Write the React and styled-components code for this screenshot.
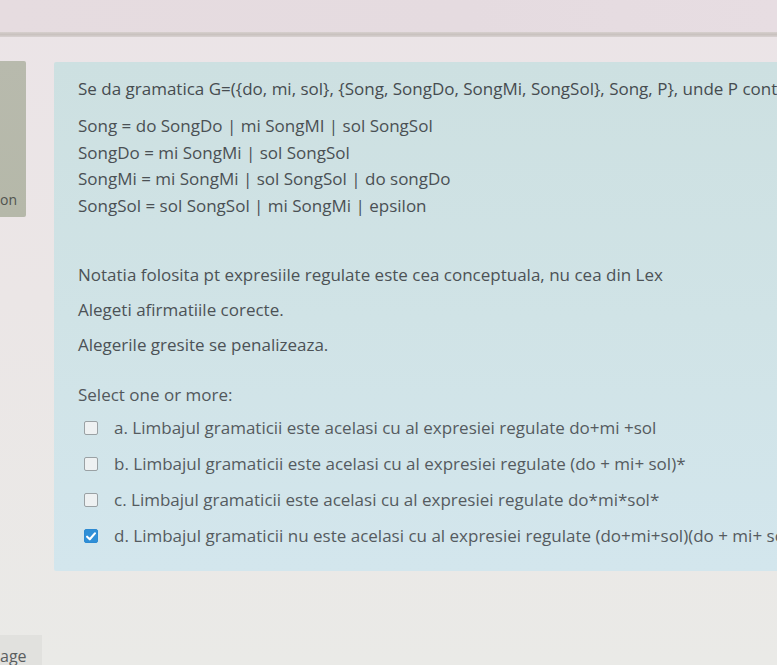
import React from "react";
import styled, { createGlobalStyle } from "styled-components";

const GlobalStyle = createGlobalStyle`
  html, body {
    margin: 0;
    padding: 0;
    background: #eae7e6;
  }
  body {
    font-family: "Open Sans", "Noto Sans", sans-serif;
    color: #4c5256;
  }
`;

const productions = [
  "Song = do SongDo | mi SongMI | sol SongSol",
  "SongDo = mi SongMi | sol SongSol",
  "SongMi = mi SongMi | sol SongSol | do songDo",
  "SongSol = sol SongSol | mi SongMi | epsilon",
];

const options = [
  { key: "a", text: "Limbajul gramaticii este acelasi cu al expresiei regulate do+mi +sol" },
  { key: "b", text: "Limbajul gramaticii este acelasi cu al expresiei regulate (do + mi+ sol)*" },
  { key: "c", text: "Limbajul gramaticii este acelasi cu al expresiei regulate do*mi*sol*" },
  {
    key: "d",
    text: "Limbajul gramaticii nu este acelasi cu al expresiei regulate (do+mi+sol)(do + mi+ sol)*",
    checked: true,
  },
];

export default function App() {
  return (
    <>
      <GlobalStyle />
      <Screen>
        <TopBar />
        <Divider />
        <Body>
          <Side>
            <NavBlock>
              <NavLabel>on</NavLabel>
            </NavBlock>
            <PageTab>age</PageTab>
          </Side>
          <Main>
            <Question>
              <Para>
                Se da gramatica G=({"{"}do, mi, sol{"}"}, {"{"}Song, SongDo, SongMi, SongSol{"}"}, Song, P{"}"}, unde P contine:
              </Para>
              <Grammar>
                {productions.map((p) => (
                  <Rule key={p}>{p}</Rule>
                ))}
              </Grammar>
              <Notes>
                <Note>Notatia folosita pt expresiile regulate este cea conceptuala, nu cea din Lex</Note>
                <Note>Alegeti afirmatiile corecte.</Note>
                <Note>Alegerile gresite se penalizeaza.</Note>
              </Notes>
              <Prompt>Select one or more:</Prompt>
              <Answers>
                {options.map((o) => (
                  <Answer key={o.key}>
                    <Box $checked={o.checked}>
                      {o.checked && (
                        <svg width="10" height="9" viewBox="0 0 9 8">
                          <path
                            d="M1 4.2 L3.4 6.5 L8 1.2"
                            fill="none"
                            stroke="#fff"
                            strokeWidth="1.9"
                            strokeLinecap="round"
                            strokeLinejoin="round"
                          />
                        </svg>
                      )}
                    </Box>
                    <AnswerText>
                      {o.key}. {o.text}
                    </AnswerText>
                  </Answer>
                ))}
              </Answers>
            </Question>
          </Main>
        </Body>
      </Screen>
    </>
  );
}

const Screen = styled.div`
  width: 777px;
  height: 665px;
  overflow: hidden;
  display: flex;
  flex-direction: column;
  background: linear-gradient(180deg, #ebe4e7 0%, #ebe6e6 45%, #eaeae7 100%);
`;

const TopBar = styled.div`
  height: 32px;
  flex-shrink: 0;
  background: linear-gradient(90deg, #e6dce0 0%, #e5dbe0 60%, #e7dde2 100%);
`;

const Divider = styled.div`
  height: 5px;
  flex-shrink: 0;
  background: linear-gradient(180deg, #d6cfcd 0%, #c9c2bf 50%, #d8d1d1 100%);
`;

const Body = styled.div`
  flex: 1;
  display: flex;
  min-height: 0;
`;

const Side = styled.div`
  width: 54px;
  flex-shrink: 0;
  display: flex;
  flex-direction: column;
  justify-content: space-between;
  padding-top: 24px;
`;

const NavBlock = styled.div`
  width: 26px;
  height: 156px;
  background: linear-gradient(180deg, #b8baad 0%, #b5b8a9 100%);
  border-radius: 0 2px 2px 0;
  display: flex;
  align-items: flex-end;
  padding-bottom: 9px;
  box-sizing: border-box;
`;

const NavLabel = styled.span`
  font-size: 14px;
  line-height: 16px;
  color: #50544f;
`;

const PageTab = styled.div`
  width: 42px;
  height: 30px;
  background: #e1e1de;
  font-size: 16px;
  line-height: 16px;
  padding-top: 13px;
  box-sizing: border-box;
  color: #5a5e60;
`;

const Main = styled.div`
  flex: 1;
  padding-top: 25px;
  min-width: 0;
`;

const Question = styled.div`
  width: 960px;
  box-sizing: border-box;
  padding: 14px 24px 22px;
  background: linear-gradient(180deg, #cde0e1 0%, #d0e3e6 50%, #d3e6ed 100%);
  border-radius: 2px 0 0 2px;
`;

const Para = styled.p`
  margin: 0;
  font-size: 17px;
  line-height: 26px;
  white-space: nowrap;
  color: #464c50;
`;

const Grammar = styled.div`
  margin-top: 11px;
  display: flex;
  flex-direction: column;
`;

const Rule = styled.div`
  font-size: 17px;
  line-height: 26.5px;
  color: #4a5054;
`;

const Notes = styled.div`
  margin-top: 43px;
  display: flex;
  flex-direction: column;
  gap: 9px;
`;

const Note = styled.p`
  margin: 0;
  font-size: 17px;
  line-height: 26px;
  color: #4c5256;
`;

const Prompt = styled.div`
  margin-top: 24px;
  font-size: 17px;
  line-height: 26px;
  color: #52585c;
`;

const Answers = styled.div`
  margin-top: 7px;
  display: flex;
  flex-direction: column;
  gap: 10px;
  padding-left: 6px;
`;

const Answer = styled.label`
  display: flex;
  align-items: center;
  gap: 16px;
  height: 26px;
`;

const Box = styled.span`
  width: 14px;
  height: 14px;
  box-sizing: border-box;
  flex-shrink: 0;
  border-radius: 2px;
  display: flex;
  align-items: center;
  justify-content: center;
  border: 1px solid ${({ $checked }) => ($checked ? "#2d8ad2" : "#9aa1a4")};
  background: ${({ $checked }) => ($checked ? "#2f8fd7" : "#eef1f2")};
`;

const AnswerText = styled.span`
  font-size: 17px;
  line-height: 26px;
  white-space: nowrap;
  color: #555b5f;
`;
